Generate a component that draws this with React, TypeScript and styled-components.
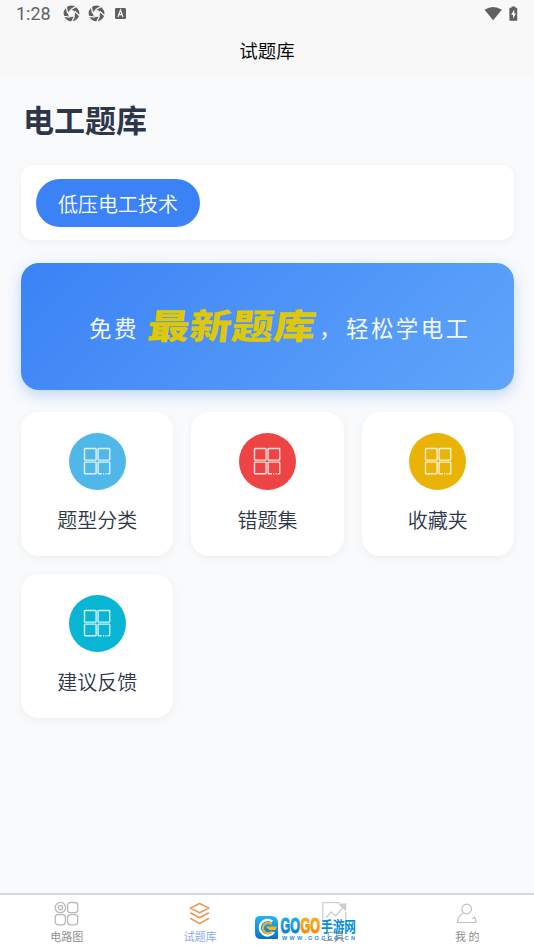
import React from "react";
import styled, { createGlobalStyle } from "styled-components";

const GlobalStyle = createGlobalStyle`
  * {
    box-sizing: border-box;
  }

  body {
    margin: 0;
    background: #f8fafc;
    font-family: "Noto Sans CJK SC", sans-serif;
  }
`;

const Page = styled.div`
  display: flex;
  flex-direction: column;
  height: 950px;
  overflow: hidden;
  background: #f8fafc;
`;

const StatusBar = styled.div`
  height: 28px;
  padding: 0 15px 0 16px;
  display: flex;
  align-items: center;
  justify-content: space-between;
  background: #f8f8f8;
  flex-shrink: 0;
`;

const StatusGroup = styled.div`
  display: flex;
  align-items: center;
  margin-top: -1px;

  svg {
    display: block;
  }
`;

const Clock = styled.span`
  width: 47px;
  color: #626262;
  font-family: Roboto, sans-serif;
  font-size: 18px;
  line-height: 28px;
`;

const AppGap = styled.span`
  width: 8px;
`;

const NavBar = styled.header`
  height: 48px;
  flex-shrink: 0;
  background: #f8f8f8;
  color: #0c0c0c;
  font-size: 18.5px;
  line-height: 44px;
  text-align: center;
`;

const Content = styled.main`
  flex: 1;
  padding: 22px 20px 0 21px;
`;

const Heading = styled.h1`
  margin: 0 0 25px 2px;
  color: #2d3748;
  font-size: 31px;
  font-weight: 700;
  line-height: 42px;
`;

const ChipPanel = styled.div`
  height: 75px;
  padding: 14px 15px;
  border-radius: 12px;
  background: #fff;
  box-shadow: 0 2px 8px rgba(0, 0, 0, 0.05);
`;

const Chip = styled.button`
  display: block;
  width: 164px;
  height: 48px;
  padding: 1px 0 0;
  border: none;
  border-radius: 24px;
  background: #3b82f6;
  color: #fff;
  font-family: inherit;
  font-size: 20px;
  font-weight: 350;
  line-height: 47px;
`;

const Banner = styled.div`
  height: 127px;
  margin-top: 23px;
  padding-left: 68px;
  display: flex;
  align-items: center;
  border-radius: 18px;
  background: linear-gradient(135deg, #3b82f6, #60a5fa);
  box-shadow: 0 5px 14px rgba(59, 130, 246, 0.3);
  white-space: nowrap;
`;

const BannerText = styled.span<{ $width: number }>`
  width: ${({ $width }) => $width}px;
  color: #f2f8ff;
  font-size: 22.5px;
  letter-spacing: 2.4px;
`;

const BannerAccent = styled.strong`
  width: 171px;
  margin: 0 0 6px -2px;
  color: #dfc80a;
  font-size: 35px;
  font-weight: 900;
  line-height: 50px;
  transform: skewX(-7deg) scaleX(1.2);
  transform-origin: left center;
`;

const CardGrid = styled.div`
  display: grid;
  grid-template-columns: repeat(3, 1fr);
  gap: 18px;
  margin-top: 22px;
`;

const Card = styled.div`
  height: 144px;
  padding-top: 21px;
  display: flex;
  flex-direction: column;
  align-items: center;
  border-radius: 18px;
  background: #fff;
  box-shadow: 0 2px 8px rgba(0, 0, 0, 0.05);
`;

const CardIcon = styled.div<{ $color: string }>`
  width: 57px;
  height: 57px;
  padding-bottom: 2px;
  display: flex;
  align-items: center;
  justify-content: center;
  border-radius: 50%;
  background: ${({ $color }) => $color};
`;

const CardLabel = styled.span`
  margin-top: 15px;
  color: #2d3748;
  font-size: 20px;
  font-weight: 350;
  line-height: 30px;
`;

const TabBar = styled.nav`
  position: relative;
  height: 57px;
  flex-shrink: 0;
  display: grid;
  grid-template-columns: repeat(4, 1fr);
  border-top: 2px solid #d5d7da;
  background: #fff;
`;

const Tab = styled.div<{ $active?: boolean }>`
  padding-top: 6px;
  display: flex;
  flex-direction: column;
  align-items: center;
  color: ${({ $active }) => ($active ? "#8baced" : "#8e8e8e")};
  font-size: 11px;
  line-height: 16px;

  svg {
    display: block;
    margin-bottom: 1px;
  }
`;

const Watermark = styled.div`
  position: absolute;
  left: 254px;
  top: 20px;

  svg {
    display: block;
    overflow: visible;
  }
`;

const ApertureIcon = () => (
  <svg width="17" height="17" viewBox="0 0 17 17">
    <circle cx="8.5" cy="8.5" r="5.7" fill="none" stroke="#606060" strokeWidth="4.4" />
    {[20, 92, 164, 236, 308].map((angle) => (
      <path
        key={angle}
        d="M6.2 5.4L10.6.2"
        stroke="#f8f8f8"
        strokeWidth="1.3"
        transform={`rotate(${angle} 8.5 8.5)`}
      />
    ))}
  </svg>
);

const GridIcon = () => (
  <svg width="28" height="28" viewBox="0 0 28 28" fill="none" stroke="#fff" strokeOpacity=".82" strokeWidth="1.4">
    <rect x="1.5" y="1.5" width="11.6" height="11.6" rx=".6" />
    <rect x="15.1" y="1.5" width="11.6" height="11.6" rx=".6" />
    <rect x="1.5" y="15.1" width="11.6" height="11.6" rx=".6" />
    <path d="M18.8 26.7h-3.2a.5.5 0 0 1-.5-.5V15.6a.5.5 0 0 1 .5-.5h10.6a.5.5 0 0 1 .5.5v10.6a.5.5 0 0 1-.5.5h-1.6M20 26.7h1.2M22.4 26.7h1.2" />
  </svg>
);

const CircuitIcon = () => (
  <svg width="26" height="26" viewBox="0 0 26 26" fill="none" stroke="#b8b8b8" strokeWidth="1.3">
    <circle cx="6.4" cy="6.6" r="5.2" />
    <circle cx="6.4" cy="6.6" r="2.2" />
    <rect x="13.6" y="1.5" width="10.2" height="10.2" rx="3" />
    <rect x="1.2" y="13.6" width="10.2" height="10.2" rx="3" />
    <rect x="13.6" y="13.6" width="10.2" height="10.2" rx="3" />
  </svg>
);

const LayersIcon = () => (
  <svg width="26" height="26" viewBox="0 0 26 26" fill="none" stroke="#ed9651" strokeWidth="1.6" strokeLinejoin="round">
    <path d="M12.6 2.5l9.3 4.6-9.3 4.7-9.3-4.7zM3.3 11.7l9.3 5 9.3-5M3.3 17.2l9.3 5.4 9.3-5.4" />
  </svg>
);

const ChartIcon = () => (
  <svg width="26" height="26" viewBox="0 0 26 26" fill="none" stroke="#cecece" strokeWidth="1.3">
    <path d="M19 1.7H1.8v22h23V11M5 17l5.2-6 4.3 4L24 4.2" />
    <path d="M18.5 3.4l6.3-.5-.4 6.2z" fill="#cecece" />
  </svg>
);

const PersonIcon = () => (
  <svg width="26" height="26" viewBox="0 0 26 26" fill="none" stroke="#c0c0c0" strokeWidth="1.2">
    <circle cx="12.7" cy="8" r="4.8" />
    <path d="M9.5 12c-3.6 1.3-5.6 4-6 9.5h18.4c0-2.3-.4-3.8-1.2-5.3l-2.4 1.5" />
  </svg>
);

const GogoLogo = () => (
  <svg width="106" height="27" viewBox="0 0 106 27">
    <defs>
      <linearGradient id="blue" x1="0" y1="0" x2="0" y2="1">
        <stop offset="0" stopColor="#22b7ee" />
        <stop offset="1" stopColor="#0871c5" />
      </linearGradient>
      <linearGradient id="orange" x1="0" y1="0" x2="0" y2="1">
        <stop offset="0" stopColor="#ffb817" />
        <stop offset="1" stopColor="#f47b00" />
      </linearGradient>
    </defs>
    <path d="M6 1h11q7 0 7 7v16H7q-6 0-6-6V6q0-5 5-5z" fill="url(#blue)" />
    <path d="M18.3 6.5a7.8 7.8 0 1 0 1.7 10.6" fill="none" stroke="#fff" strokeWidth="2.4" />
    <path d="M17.6 9.2a5.2 5.2 0 1 0 .6 7.1" fill="none" stroke="#ffae21" strokeWidth="2" />
    <path d="M12 11.6h11l-1.4 3.4h-6.4z" fill="#ffae21" />
    <g fontFamily="Liberation Sans, sans-serif" fontWeight="700" fontSize="22">
      <text x="26.5" y="18" textLength="19.5" lengthAdjust="spacingAndGlyphs" fill="url(#blue)" stroke="url(#blue)" strokeWidth="1.1">
        GO
      </text>
      <text x="46.5" y="18" textLength="19.5" lengthAdjust="spacingAndGlyphs" fill="url(#orange)" stroke="url(#orange)" strokeWidth="1.1">
        GO
      </text>
    </g>
    <text
      x="67"
      y="16.5"
      textLength="35"
      lengthAdjust="spacingAndGlyphs"
      fontFamily="Noto Sans CJK SC, sans-serif"
      fontWeight="700"
      fontSize="15"
      fill="#078ddd"
    >
      手游网
    </text>
    <text
      x="28"
      y="24.5"
      textLength="73"
      fontFamily="Liberation Sans, sans-serif"
      fontWeight="700"
      fontSize="5.5"
      fill="#258ed0"
    >
      WWW.GOGGO.CN
    </text>
  </svg>
);

const cards = [
  { label: "题型分类", color: "#50b8e9" },
  { label: "错题集", color: "#ef4444" },
  { label: "收藏夹", color: "#e9b308" },
  { label: "建议反馈", color: "#08b5d5" },
];

const tabs = [
  { label: "电路图", icon: <CircuitIcon /> },
  { label: "试题库", icon: <LayersIcon />, active: true },
  { label: "工具", icon: <ChartIcon /> },
  { label: "我 的", icon: <PersonIcon /> },
];

export default function App() {
  return (
    <Page>
      <GlobalStyle />
      <StatusBar>
        <StatusGroup>
          <Clock>1:28</Clock>
          <ApertureIcon />
          <AppGap />
          <ApertureIcon />
          <svg width="27" height="17" viewBox="0 0 27 17">
            <rect x="10" y="3" width="11" height="11" rx="1.3" fill="#606060" />
            <path d="M13 12l2.5-7 2.5 7M14 9.7h3" fill="none" stroke="#f8f8f8" strokeWidth="1.2" />
          </svg>
        </StatusGroup>
        <StatusGroup>
          <svg width="35" height="18" viewBox="0 0 35 18">
            <path d="M.5 4.8Q9.2-.9 17.8 4.8L9.2 15.3z" fill="#606060" />
            <path d="M27.5 1.5h3.8v1.3h1.9v13h-7.8v-13h2.1z" fill="#606060" />
            <path d="M30.3 4.5l-3.2 5.2h1.9v4l3-5.3h-1.7z" fill="#f8f8f8" />
          </svg>
        </StatusGroup>
      </StatusBar>
      <NavBar>试题库</NavBar>
      <Content>
        <Heading>电工题库</Heading>
        <ChipPanel>
          <Chip>低压电工技术</Chip>
        </ChipPanel>
        <Banner>
          <BannerText $width={61}>免费</BannerText>
          <BannerAccent>最新题库</BannerAccent>
          <BannerText $width={27}>，</BannerText>
          <BannerText $width={125}>轻松学电工</BannerText>
        </Banner>
        <CardGrid>
          {cards.map(({ label, color }) => (
            <Card key={label}>
              <CardIcon $color={color}>
                <GridIcon />
              </CardIcon>
              <CardLabel>{label}</CardLabel>
            </Card>
          ))}
        </CardGrid>
      </Content>
      <TabBar>
        {tabs.map(({ label, icon, active }) => (
          <Tab key={label} $active={active}>
            {icon}
            {label}
          </Tab>
        ))}
        <Watermark>
          <GogoLogo />
        </Watermark>
      </TabBar>
    </Page>
  );
}
